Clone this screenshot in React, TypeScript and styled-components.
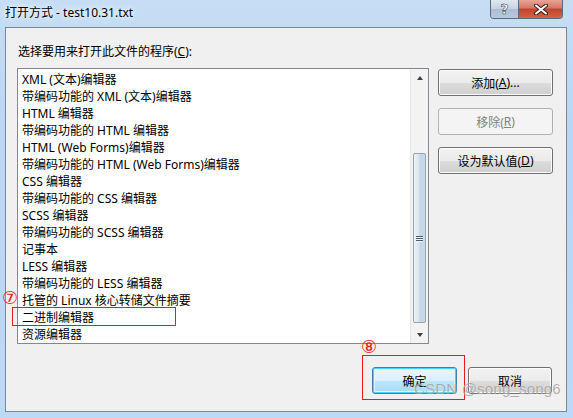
import React from 'react'
import styled, { createGlobalStyle } from 'styled-components'

const Global = createGlobalStyle`
  html, body { margin: 0; padding: 0; background: #fff; }
  body { font-family: "Segoe UI", "Noto Sans", "Noto Sans CJK SC", sans-serif; }
`

const programs = [
  'XML (文本)编辑器',
  '带编码功能的 XML (文本)编辑器',
  'HTML 编辑器',
  '带编码功能的 HTML 编辑器',
  'HTML (Web Forms)编辑器',
  '带编码功能的 HTML (Web Forms)编辑器',
  'CSS 编辑器',
  '带编码功能的 CSS 编辑器',
  'SCSS 编辑器',
  '带编码功能的 SCSS 编辑器',
  '记事本',
  'LESS 编辑器',
  '带编码功能的 LESS 编辑器',
  '托管的 Linux 核心转储文件摘要',
  '二进制编辑器',
  '资源编辑器',
]

function Accel({ text, k }: { text: string; k: string }) {
  const i = text.indexOf(k)
  return <>
    {text.slice(0, i)}<u>{k}</u>{text.slice(i + 1)}
  </>
}

export default function App() {
  return <>
    <Global />
    <Window>
      <TitleBar>
        <Title>打开方式 - test10.31.txt</Title>
        <Controls>
          <HelpBtn>?</HelpBtn>
          <CloseBtn>
            <svg width="14" height="11" viewBox="0 0 14 11">
              <path d="M2 1.5 L12 9.5 M12 1.5 L2 9.5" stroke="#3b2020" strokeWidth="4" strokeLinecap="round" />
              <path d="M2 1.5 L12 9.5 M12 1.5 L2 9.5" stroke="#fff" strokeWidth="2" strokeLinecap="round" />
            </svg>
          </CloseBtn>
        </Controls>
      </TitleBar>
      <Panel>
        <Prompt><Accel text="选择要用来打开此文件的程序(C):" k="C" /></Prompt>
        <Body>
          <ListBox>
            <Items>
              {programs.map(p => <Item key={p}>{p}</Item>)}
            </Items>
            <ScrollBar>
              <ArrowBtn><Arrow up /></ArrowBtn>
              <Track>
                <Thumb style={{ marginTop: 67, height: 170 }}>
                  <Grip><i /><i /><i /></Grip>
                </Thumb>
              </Track>
              <ArrowBtn><Arrow /></ArrowBtn>
            </ScrollBar>
          </ListBox>
          <Side>
            <Button><Accel text="添加(A)..." k="A" /></Button>
            <Button disabled><Accel text="移除(R)" k="R" /></Button>
            <Button><Accel text="设为默认值(D)" k="D" /></Button>
          </Side>
        </Body>
        <Footer>
          <Button primary $w={85}>确定</Button>
          <Button $w={84}>取消</Button>
        </Footer>
      </Panel>
      <Mark $left={2} $top={288}>⑦</Mark>
      <MarkBox7 />
      <Mark $left={361} $top={337}>⑧</Mark>
      <MarkBox8 />
      <Watermark>CSDN @song_song6</Watermark>
    </Window>
  </>
}

const Window = styled.div`
  position: relative;
  width: 573px;
  height: 418px;
  box-sizing: border-box;
  display: flex;
  flex-direction: column;
  padding: 0 6px 6px 5px;
  background: linear-gradient(180deg, #c6def5 0%, #b9d7f4 30%, #bcdaf6 100%);
  font-size: 12px;
  color: #000;
  overflow: hidden;
`
const TitleBar = styled.div`
  height: 27px;
  display: flex;
  align-items: flex-start;
  justify-content: space-between;
`
const Title = styled.div`
  margin-top: 5px;
  font-size: 12px;
  line-height: 16px;
  color: #000;
  text-shadow: 0 0 8px #fff, 0 0 4px #fff;
`
const Controls = styled.div`
  display: flex;
  margin-right: 4px;
  height: 18px;
  border: 1px solid #5c6a7c;
  border-top: none;
  border-radius: 0 0 4px 4px;
  overflow: hidden;
`
const HelpBtn = styled.div`
  width: 27px;
  display: flex;
  align-items: center;
  justify-content: center;
  font: bold 14px "DejaVu Sans", sans-serif;
  color: #fff;
  -webkit-text-stroke: 0.6px #3d4a5c;
  background: linear-gradient(180deg, #dfe8f1 0%, #c3d2e2 50%, #a9bdd3 51%, #b7cbe0 100%);
  border-right: 1px solid #5c6a7c;
`
const CloseBtn = styled.div`
  width: 43px;
  display: flex;
  align-items: center;
  justify-content: center;
  background: linear-gradient(180deg, #e8a493 0%, #d47666 45%, #c0432f 50%, #d6613f 100%);
`
const Panel = styled.div`
  flex: 1;
  display: flex;
  flex-direction: column;
  background: #f0f0f0;
  border: 1px solid #7a8796;
  padding: 16px 0 0 11px;
`
const Prompt = styled.div`
  line-height: 16px;
  margin-left: 1px;
`
const Body = styled.div`
  display: flex;
  margin-top: 8px;
  gap: 9px;
`
const ListBox = styled.div`
  width: 412px;
  height: 276px;
  box-sizing: border-box;
  border: 1px solid #828790;
  background: #fff;
  display: flex;
`
const Items = styled.div`
  flex: 1;
  padding-top: 2px;
`
const Item = styled.div`
  height: 17px;
  line-height: 17px;
  padding-left: 4px;
  white-space: nowrap;
`
const ScrollBar = styled.div`
  width: 17px;
  display: flex;
  flex-direction: column;
  background: #f3f3f3;
  border-left: 1px solid #e6e6e6;
`
const ArrowBtn = styled.div`
  height: 17px;
  display: flex;
  align-items: center;
  justify-content: center;
`
const Arrow = styled.div<{ up?: boolean }>`
  width: 0;
  height: 0;
  border-left: 3.5px solid transparent;
  border-right: 3.5px solid transparent;
  ${p => p.up ? 'border-bottom: 4px solid #404040;' : 'border-top: 4px solid #404040;'}
`
const Track = styled.div`
  flex: 1;
  display: flex;
  flex-direction: column;
  align-items: center;
`
const Thumb = styled.div`
  width: 13px;
  box-sizing: border-box;
  border: 1px solid #98a4b0;
  border-radius: 2px;
  background: linear-gradient(90deg, #eef3f8 0%, #d8e4ef 45%, #c4d5e5 55%, #cbdae8 100%);
  display: flex;
  align-items: center;
  justify-content: center;
`
const Grip = styled.div`
  display: flex;
  flex-direction: column;
  gap: 1px;
  & i {
    display: block;
    width: 7px;
    height: 1px;
    background: #4c5a6a;
    box-shadow: 0 1px 0 #eef4fa;
  }
`
const Side = styled.div`
  width: 115px;
  margin-top: 1px;
  display: flex;
  flex-direction: column;
  gap: 12px;
`
const Button = styled.div<{ primary?: boolean; disabled?: boolean; $w?: number }>`
  height: 27px;
  ${p => p.$w ? `width: ${p.$w}px;` : ''}
  box-sizing: border-box;
  border-radius: 3px;
  display: flex;
  align-items: center;
  justify-content: center;
  font-size: 12px;
  border: 1px solid #707070;
  color: #000;
  box-shadow: inset 0 0 0 1px #fcfcfc;
  background: linear-gradient(180deg, #f2f2f2 0%, #ebebeb 50%, #dddddd 51%, #cfcfcf 100%);
  ${p => p.disabled ? `
    border-color: #adb2b5;
    color: #838383;
    box-shadow: none;
    background: #f4f4f4;
  ` : ''}
  ${p => p.primary ? `
    border-color: #3c7fb1;
    box-shadow: inset 0 0 0 1px #48d2f8, inset 0 0 0 2px #dff3fb;
    background: linear-gradient(180deg, #eaf6fd 0%, #d9f0fc 50%, #bee6fd 51%, #a7d9f5 100%);
  ` : ''}
`
const Footer = styled.div`
  display: flex;
  justify-content: flex-end;
  gap: 11px;
  margin-top: 23px;
  margin-right: 14px;
`
const Mark = styled.div<{ $left: number; $top: number }>`
  position: absolute;
  left: ${p => p.$left}px;
  top: ${p => p.$top}px;
  font: 18px "DejaVu Sans", sans-serif;
  line-height: 20px;
  color: #e8231c;
`
const MarkBox7 = styled.div`
  position: absolute;
  left: 12px;
  top: 307px;
  width: 162px;
  height: 17px;
  border: 1px solid #e51d1d;
`
const MarkBox8 = styled.div`
  position: absolute;
  left: 362px;
  top: 355px;
  width: 101px;
  height: 43px;
  border: 1px solid #e51d1d;
`
const Watermark = styled.div`
  position: absolute;
  left: 414px;
  top: 380px;
  font: 15px "Liberation Sans", sans-serif;
  letter-spacing: 0.2px;
  color: rgba(120, 120, 120, 0.6);
  text-shadow: 0 0 1px rgba(255, 255, 255, 0.8);
`
